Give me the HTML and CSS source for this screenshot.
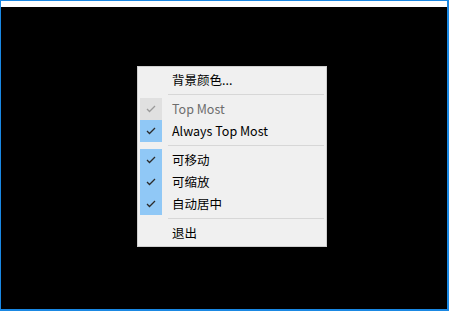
FILE: index.html
```html
<!DOCTYPE html>
<html lang="zh-CN">

<head>
    <meta charset="UTF-8">
    <title>Window Menu</title>
    <link rel="stylesheet" href="styles.css">
</head>

<body>
    <div class="window">
        <div class="client">

            <!-- Context menu -->
            <div class="menu">
                <div class="item">
                    <span class="check"></span>
                    <span class="label">背景颜色...</span>
                </div>
                <div class="separator"></div>

                <div class="item disabled">
                    <span class="check on">
                        <svg width="10" height="8" viewBox="0 0 10 8"><polyline points="1,4 3.5,6.5 9,1" /></svg>
                    </span>
                    <span class="label">Top Most</span>
                </div>
                <div class="item">
                    <span class="check on">
                        <svg width="10" height="8" viewBox="0 0 10 8"><polyline points="1,4 3.5,6.5 9,1" /></svg>
                    </span>
                    <span class="label">Always Top Most</span>
                </div>
                <div class="separator"></div>

                <div class="item">
                    <span class="check on">
                        <svg width="10" height="8" viewBox="0 0 10 8"><polyline points="1,4 3.5,6.5 9,1" /></svg>
                    </span>
                    <span class="label">可移动</span>
                </div>
                <div class="item">
                    <span class="check on">
                        <svg width="10" height="8" viewBox="0 0 10 8"><polyline points="1,4 3.5,6.5 9,1" /></svg>
                    </span>
                    <span class="label">可缩放</span>
                </div>
                <div class="item">
                    <span class="check on">
                        <svg width="10" height="8" viewBox="0 0 10 8"><polyline points="1,4 3.5,6.5 9,1" /></svg>
                    </span>
                    <span class="label">自动居中</span>
                </div>
                <div class="separator"></div>

                <div class="item">
                    <span class="check"></span>
                    <span class="label">退出</span>
                </div>
            </div>

        </div>
    </div>
</body>

</html>
```

FILE: styles.css
```css
body {
    margin: 0;
    padding: 0;
    background-color: #fff;
    font-family: 'Noto Sans CJK SC', 'Noto Sans', sans-serif;
    font-size: 12px;
}

.window {
    position: relative;
    display: flex;
    flex-direction: column;
    width: 449px;
    height: 311px;
    box-sizing: border-box;
    border: 1px solid #1a88e3;
    border-bottom-width: 2px;
    border-right-width: 2px;
    padding-top: 6px;
    background-color: #fff;
}

.client {
    flex: 1;
    background-color: #000;
}

/* popup menu sits over the black client area */
.menu {
    position: absolute;
    left: 136px;
    top: 65px;
    width: 190px;
    box-sizing: border-box;
    padding: 2px;
    background-color: #f0f0f0;
    border: 1px solid #cfcfcf;
}

.item {
    display: flex;
    align-items: center;
    height: 22px;
    color: #000;
}

.item.disabled {
    color: #6d6d6d;
}

.check {
    display: flex;
    align-items: center;
    justify-content: center;
    width: 22px;
    height: 22px;
    flex-shrink: 0;
}

.check.on {
    background-color: #90c8f6;
}

.item.disabled .check.on {
    background-color: #e0e0e0;
}

.check svg polyline {
    fill: none;
    stroke: #2b2b2b;
    stroke-width: 1.3;
}

.item.disabled .check svg polyline {
    stroke: #9a9a9a;
}

.label {
    margin-left: 10px;
    line-height: 22px;
    white-space: nowrap;
    font-size: 12.5px;
}

.separator {
    height: 1px;
    margin: 3px 0 3px 28px;
    background-color: #d7d7d7;
}
```
